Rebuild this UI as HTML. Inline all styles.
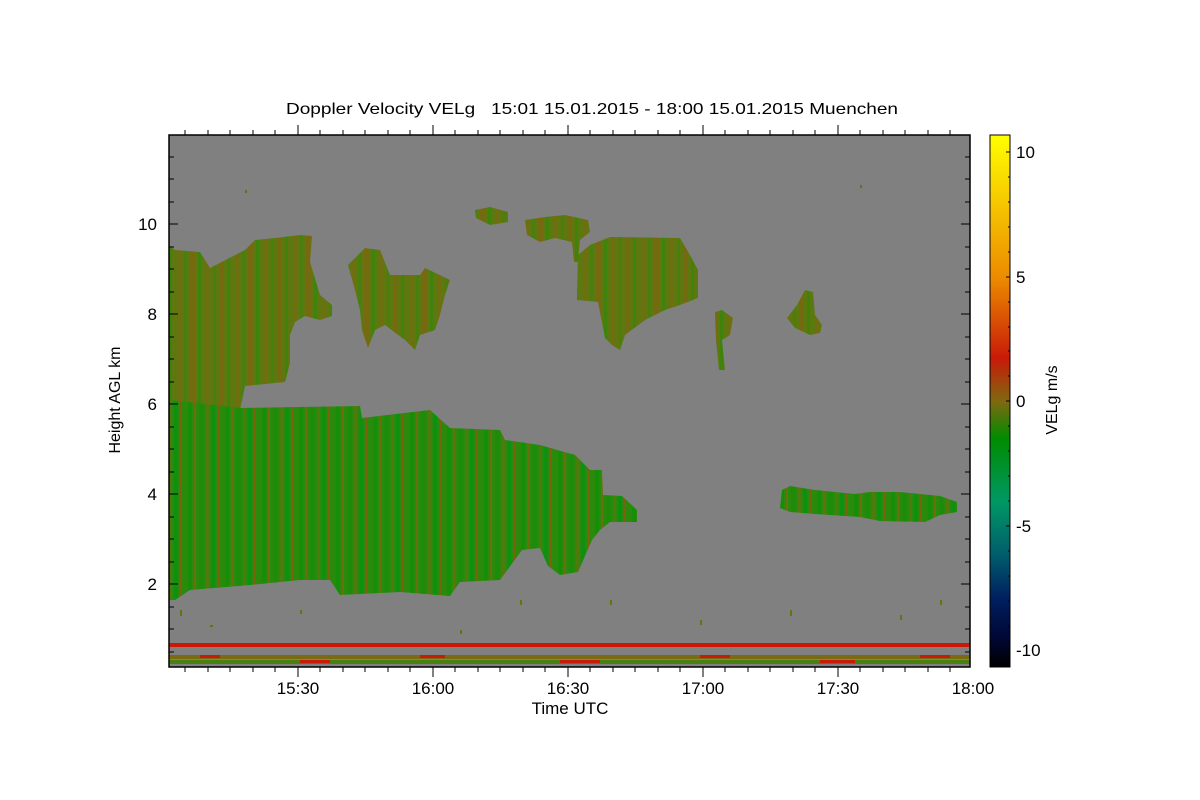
<!DOCTYPE html>
<html><head><meta charset="utf-8"><style>
html,body{margin:0;padding:0;background:#fff;}
svg{display:block;font-family:"Liberation Sans",sans-serif;}
</style></head><body>
<svg width="1200" height="800" viewBox="0 0 1200 800" xmlns="http://www.w3.org/2000/svg">
<defs>
<pattern id="lo" width="37" height="600" patternUnits="userSpaceOnUse">
<rect width="37" height="600" fill="#2a8a0c"/>
<rect x="3" width="4" height="600" fill="#168e08"/>
<rect x="9" width="2" height="600" fill="#6a7010"/>
<rect x="14" width="5" height="600" fill="#1c8c0a"/>
<rect x="21" width="3" height="600" fill="#4f7a0e"/>
<rect x="26" width="4" height="600" fill="#0e9010"/>
<rect x="32" width="2" height="600" fill="#7a6210"/>
</pattern>
<pattern id="up" width="29" height="600" patternUnits="userSpaceOnUse">
<rect width="29" height="600" fill="#5e7810"/>
<rect x="3" width="4" height="600" fill="#6f6e10"/>
<rect x="10" width="3" height="600" fill="#4a7e0e"/>
<rect x="16" width="5" height="600" fill="#766a10"/>
<rect x="24" width="3" height="600" fill="#3f820c"/>
</pattern>
<linearGradient id="cb" x1="0" y1="0" x2="0" y2="1">
<stop offset="0" stop-color="#ffff00"/>
<stop offset="0.27" stop-color="#ec8a00"/>
<stop offset="0.42" stop-color="#c81a08"/>
<stop offset="0.5" stop-color="#806810"/>
<stop offset="0.57" stop-color="#008c00"/>
<stop offset="0.69" stop-color="#009864"/>
<stop offset="0.79" stop-color="#005c6c"/>
<stop offset="0.87" stop-color="#002060"/>
<stop offset="0.94" stop-color="#000838"/>
<stop offset="1" stop-color="#000000"/>
</linearGradient>
<clipPath id="pc"><rect x="169" y="135" width="801" height="532"/></clipPath>
</defs>

<rect x="169" y="135" width="801" height="532" fill="#808080"/>
<g clip-path="url(#pc)">
<path fill="url(#up)" d="M169,245 L175,250 L200,252 L210,268 L245,250 L255,240 L275,238 L300,235 L312,236 L310,262 L320,295 L332,305 L332,316 L320,320 L305,316 L295,322 L290,335 L290,363 L285,382 L245,386 L240,410 L169,410 Z"/>
<path fill="url(#lo)" d="M169,400 L240,408 L360,406 L362,418 L430,410 L450,428 L500,430 L505,440 L540,445 L575,455 L590,470 L602,470 L603,495 L622,496 L637,510 L637,522 L610,522 L600,530 L592,540 L578,572 L560,575 L548,566 L540,548 L522,550 L500,580 L460,582 L450,596 L400,592 L340,595 L330,580 L300,580 L250,585 L190,590 L175,600 L169,600 Z"/>
<path fill="url(#up)" d="M348,265 L365,248 L380,250 L390,275 L420,275 L425,268 L450,280 L445,295 L440,315 L435,330 L420,335 L415,350 L405,340 L385,325 L375,330 L368,348 L362,330 L360,310 L355,290 Z"/>
<path fill="url(#up)" d="M475,210 L490,207 L508,212 L508,222 L490,225 L476,218 Z"/>
<path fill="url(#up)" d="M525,220 L545,217 L565,215 L588,220 L590,232 L580,240 L578,262 L574,262 L572,242 L555,238 L540,242 L527,235 Z"/>
<path fill="url(#up)" d="M578,255 L590,245 L610,237 L680,238 L690,255 L698,270 L698,298 L680,305 L665,310 L645,320 L625,335 L620,350 L612,345 L605,338 L598,302 L577,300 Z"/>
<path fill="url(#up)" d="M715,312 L722,310 L733,318 L730,335 L722,340 L725,370 L719,370 L716,340 Z"/>
<path fill="url(#up)" d="M797,305 L805,290 L813,292 L815,315 L822,325 L820,333 L810,335 L795,328 L787,318 Z"/>
<path fill="url(#lo)" d="M782,490 L790,486 L815,490 L855,494 L870,492 L900,492 L940,496 L957,502 L957,512 L940,515 L925,522 L880,521 L860,517 L815,514 L790,512 L780,508 Z"/>
<rect x="169" y="643" width="801" height="4" fill="#cc1608"/>
<rect x="169" y="655" width="801" height="4" fill="#7a6a12"/>
<rect x="169" y="660" width="801" height="4" fill="#4a8010"/>
<g fill="#c81a08">
<rect x="200" y="655" width="20" height="3"/><rect x="300" y="660" width="30" height="3"/><rect x="420" y="655" width="25" height="3"/><rect x="560" y="660" width="40" height="3"/><rect x="700" y="655" width="30" height="3"/><rect x="820" y="660" width="35" height="3"/><rect x="920" y="655" width="30" height="3"/></g>
<g fill="#5a7a10">
<rect x="180" y="610" width="2" height="6"/><rect x="210" y="625" width="3" height="2"/><rect x="300" y="610" width="2" height="4"/><rect x="460" y="630" width="2" height="4"/><rect x="520" y="600" width="2" height="5"/><rect x="610" y="600" width="2" height="5"/><rect x="700" y="620" width="2" height="5"/><rect x="790" y="610" width="2" height="6"/><rect x="900" y="615" width="2" height="5"/><rect x="245" y="190" width="2" height="3"/><rect x="860" y="185" width="2" height="3"/><rect x="940" y="600" width="2" height="5"/></g>
</g>
<rect x="169" y="135" width="801" height="532" fill="none" stroke="#000" stroke-width="1.5"/>

<g stroke="#000" stroke-width="1">
<path d="M169,224h9M169,314h9M169,404h9M169,494h9M169,584h9M970,224h-9M970,314h-9M970,404h-9M970,494h-9M970,584h-9"/>
<path d="M169,157h5M169,179h5M169,202h5M169,247h5M169,269h5M169,292h5M169,337h5M169,359h5M169,382h5M169,427h5M169,449h5M169,472h5M169,517h5M169,539h5M169,562h5M169,607h5M169,629h5M169,652h5"/>
<path d="M970,157h-5M970,179h-5M970,202h-5M970,247h-5M970,269h-5M970,292h-5M970,337h-5M970,359h-5M970,382h-5M970,427h-5M970,449h-5M970,472h-5M970,517h-5M970,539h-5M970,562h-5M970,607h-5M970,629h-5M970,652h-5"/>
<path d="M298,667v10M433,667v10M568,667v10M703,667v10M838,667v10M298,135v-10M433,135v-10M568,135v-10M703,135v-10M838,135v-10"/>
<path d="M185,667v5M208,667v5M230,667v5M253,667v5M275,667v5M320,667v5M343,667v5M365,667v5M388,667v5M410,667v5M455,667v5M478,667v5M500,667v5M523,667v5M545,667v5M590,667v5M613,667v5M635,667v5M658,667v5M680,667v5M725,667v5M748,667v5M770,667v5M793,667v5M815,667v5M860,667v5M883,667v5M905,667v5M928,667v5M950,667v5"/>
<path d="M185,135v-5M208,135v-5M230,135v-5M253,135v-5M275,135v-5M320,135v-5M343,135v-5M365,135v-5M388,135v-5M410,135v-5M455,135v-5M478,135v-5M500,135v-5M523,135v-5M545,135v-5M590,135v-5M613,135v-5M635,135v-5M658,135v-5M680,135v-5M725,135v-5M748,135v-5M770,135v-5M793,135v-5M815,135v-5M860,135v-5M883,135v-5M905,135v-5M928,135v-5M950,135v-5"/>
</g>

<rect x="990" y="135" width="20" height="532" fill="url(#cb)" stroke="#000" stroke-width="1"/>
<g stroke="#000"><path d="M1010,152h-4M1010,277h-4M1010,401h-4M1010,526h-4M1010,650h-4M1010,177h-2M1010,202h-2M1010,227h-2M1010,252h-2M1010,302h-2M1010,327h-2M1010,351h-2M1010,376h-2M1010,426h-2M1010,451h-2M1010,476h-2M1010,501h-2M1010,551h-2M1010,576h-2M1010,601h-2M1010,626h-2"/></g>

<g font-size="16" fill="#000">
<text x="592" y="114" text-anchor="middle" textLength="612" lengthAdjust="spacingAndGlyphs">Doppler Velocity VELg&#160;&#160;&#160;15:01 15.01.2015 - 18:00 15.01.2015 Muenchen</text>
<text x="157" y="230" text-anchor="end" font-size="17">10</text>
<text x="157" y="320" text-anchor="end" font-size="17">8</text>
<text x="157" y="410" text-anchor="end" font-size="17">6</text>
<text x="157" y="500" text-anchor="end" font-size="17">4</text>
<text x="157" y="590" text-anchor="end" font-size="17">2</text>
<text x="298" y="694" text-anchor="middle" font-size="17">15:30</text>
<text x="433" y="694" text-anchor="middle" font-size="17">16:00</text>
<text x="568" y="694" text-anchor="middle" font-size="17">16:30</text>
<text x="703" y="694" text-anchor="middle" font-size="17">17:00</text>
<text x="838" y="694" text-anchor="middle" font-size="17">17:30</text>
<text x="973" y="694" text-anchor="middle" font-size="17">18:00</text>
<text x="570" y="714" text-anchor="middle" font-size="17">Time UTC</text>
<text x="120" y="400" text-anchor="middle" transform="rotate(-90 120 400)">Height AGL km</text>
<text x="1016" y="158" font-size="17">10</text>
<text x="1016" y="283" font-size="17">5</text>
<text x="1016" y="407" font-size="17">0</text>
<text x="1016" y="532" font-size="17">-5</text>
<text x="1016" y="656" font-size="17">-10</text>
<text x="1057" y="400" text-anchor="middle" transform="rotate(-90 1057 400)">VELg m/s</text>
</g>
</svg>
</body></html>
